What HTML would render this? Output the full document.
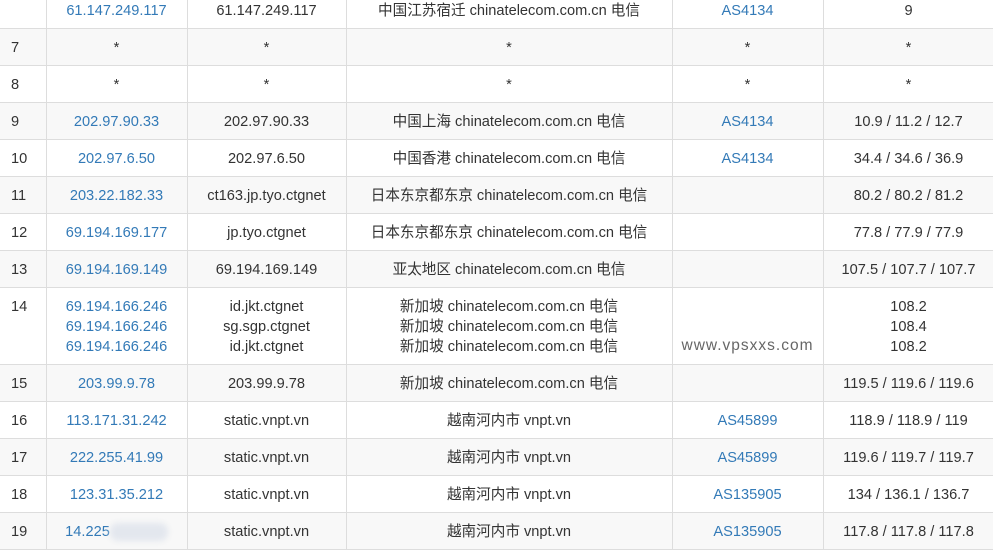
<!DOCTYPE html><html><head><meta charset="utf-8"><style>
body{margin:0;width:993px;height:550px;overflow:hidden;background:#fff;font-family:"Liberation Sans","Noto Sans CJK SC",sans-serif;font-size:14.6px;color:#333}
table{position:absolute;left:0;top:-9px;border-collapse:collapse;width:994px;table-layout:fixed}
td{border:1px solid #ddd;text-align:center;height:34px;padding:2px 0 0 0;line-height:20px;white-space:nowrap}
td:first-child{text-align:left;padding-left:11px;border-left:none}
tr:nth-child(even) td{background:#f8f8f8}
.b{color:#337ab7}
.wm{color:#666;font-size:15.5px;letter-spacing:1px;vertical-align:bottom;padding-bottom:8px}
.blur{display:inline-block;width:58px;height:18px;background:#e3e7ee;filter:blur(3px);vertical-align:middle;border-radius:8px}
</style></head><body><table>
<colgroup><col style="width:46px"><col style="width:141px"><col style="width:159px"><col style="width:326px"><col style="width:151px"><col style="width:171px"></colgroup>
<tr><td></td><td class="b">61.147.249.117</td><td>61.147.249.117</td><td>中国江苏宿迁 chinatelecom.com.cn 电信</td><td class="b">AS4134</td><td>9</td></tr>
<tr><td>7</td><td>*</td><td>*</td><td>*</td><td>*</td><td>*</td></tr>
<tr><td>8</td><td>*</td><td>*</td><td>*</td><td>*</td><td>*</td></tr>
<tr><td>9</td><td class="b">202.97.90.33</td><td>202.97.90.33</td><td>中国上海 chinatelecom.com.cn 电信</td><td class="b">AS4134</td><td>10.9 / 11.2 / 12.7</td></tr>
<tr><td>10</td><td class="b">202.97.6.50</td><td>202.97.6.50</td><td>中国香港 chinatelecom.com.cn 电信</td><td class="b">AS4134</td><td>34.4 / 34.6 / 36.9</td></tr>
<tr><td>11</td><td class="b">203.22.182.33</td><td>ct163.jp.tyo.ctgnet</td><td>日本东京都东京 chinatelecom.com.cn 电信</td><td></td><td>80.2 / 80.2 / 81.2</td></tr>
<tr><td>12</td><td class="b">69.194.169.177</td><td>jp.tyo.ctgnet</td><td>日本东京都东京 chinatelecom.com.cn 电信</td><td></td><td>77.8 / 77.9 / 77.9</td></tr>
<tr><td>13</td><td class="b">69.194.169.149</td><td>69.194.169.149</td><td>亚太地区 chinatelecom.com.cn 电信</td><td></td><td>107.5 / 107.7 / 107.7</td></tr>
<tr><td style="vertical-align:top;padding-top:9px">14</td><td class="b" style="height:74px">69.194.166.246<br>69.194.166.246<br>69.194.166.246</td><td>id.jkt.ctgnet<br>sg.sgp.ctgnet<br>id.jkt.ctgnet</td><td>新加坡 chinatelecom.com.cn 电信<br>新加坡 chinatelecom.com.cn 电信<br>新加坡 chinatelecom.com.cn 电信</td><td class="wm">www.vpsxxs.com</td><td>108.2<br>108.4<br>108.2</td></tr>
<tr><td>15</td><td class="b">203.99.9.78</td><td>203.99.9.78</td><td>新加坡 chinatelecom.com.cn 电信</td><td></td><td>119.5 / 119.6 / 119.6</td></tr>
<tr><td>16</td><td class="b">113.171.31.242</td><td>static.vnpt.vn</td><td>越南河内市 vnpt.vn</td><td class="b">AS45899</td><td>118.9 / 118.9 / 119</td></tr>
<tr><td>17</td><td class="b">222.255.41.99</td><td>static.vnpt.vn</td><td>越南河内市 vnpt.vn</td><td class="b">AS45899</td><td>119.6 / 119.7 / 119.7</td></tr>
<tr><td>18</td><td class="b">123.31.35.212</td><td>static.vnpt.vn</td><td>越南河内市 vnpt.vn</td><td class="b">AS135905</td><td>134 / 136.1 / 136.7</td></tr>
<tr><td>19</td><td class="b">14.225<span class="blur"></span></td><td>static.vnpt.vn</td><td>越南河内市 vnpt.vn</td><td class="b">AS135905</td><td>117.8 / 117.8 / 117.8</td></tr>
</table></body></html>
